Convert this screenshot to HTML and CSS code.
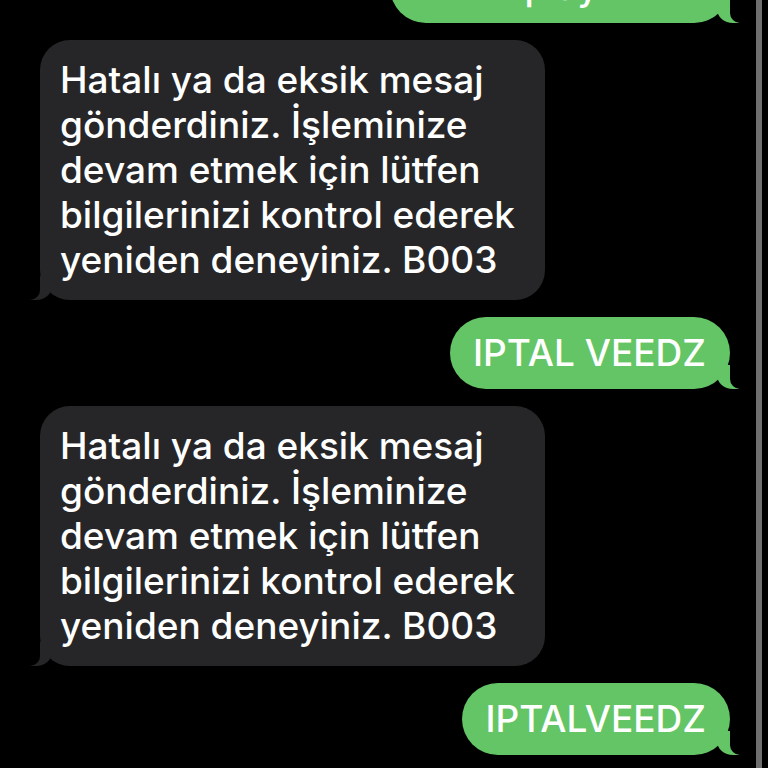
FILE: index.html
```html
<!DOCTYPE html>
<html lang="tr">
<head>
<meta charset="utf-8">
<title>Mesajlar</title>
<link rel="stylesheet" href="styles.css">
</head>
<body>
<div class="screen">
  <main class="thread">
    <div class="msg sent top-cut">IPTAL playveedz</div>
    <div class="msg received">Hatalı ya da eksik mesaj gönderdiniz. İşleminize devam etmek için lütfen bilgilerinizi kontrol ederek yeniden deneyiniz. B003</div>
    <div class="msg sent">IPTAL VEEDZ</div>
    <div class="msg received">Hatalı ya da eksik mesaj gönderdiniz. İşleminize devam etmek için lütfen bilgilerinizi kontrol ederek yeniden deneyiniz. B003</div>
    <div class="msg sent">IPTALVEEDZ</div>
  </main>
  <div class="edge"></div>
  <div class="gutter"></div>
</div>
</body>
</html>
```

FILE: styles.css
```css
html, body {
  margin: 0;
  padding: 0;
  background: #000;
  height: 100%;
  overflow: hidden;
}

.screen {
  display: flex;
  height: 768px;
  background: #000;
}

.thread {
  flex: 1;
  display: flex;
  flex-direction: column;
  gap: 17px;
  margin-top: -49px;
  padding: 0 26px 0 40px;
  font-family: Inter, "Noto Sans", sans-serif;
  font-size: 37px;
  font-weight: 500;
  color: #fff;
  overflow: hidden;
}

.edge {
  width: 6px;
  background: #6f6f6f;
}

.gutter {
  width: 6px;
  background: #000;
}

.msg {
  position: relative;
  box-sizing: border-box;
}

.received {
  align-self: flex-start;
  width: 505px;
  background: #262628;
  border-radius: 30px;
  padding: 17px 20px 18px;
  line-height: 45px;
}

.sent {
  align-self: flex-end;
  background: #64c566;
  border-radius: 36px;
  padding: 13px 24px 13px 23px;
  line-height: 46px;
}

.sent::before,
.sent::after,
.received::before,
.received::after {
  content: "";
  position: absolute;
  bottom: 0;
}

.sent::before {
  right: -9px;
  width: 22px;
  height: 24px;
  background: #64c566;
  border-bottom-left-radius: 16px 14px;
}

.sent::after {
  right: -10px;
  width: 10px;
  height: 24px;
  background: #000;
  border-bottom-left-radius: 10px;
}

.received::before {
  left: -12px;
  width: 24px;
  height: 24px;
  background: #262628;
  border-bottom-right-radius: 16px 14px;
}

.received::after {
  left: -12px;
  width: 12px;
  height: 24px;
  background: #000;
  border-bottom-right-radius: 10px;
}
```
